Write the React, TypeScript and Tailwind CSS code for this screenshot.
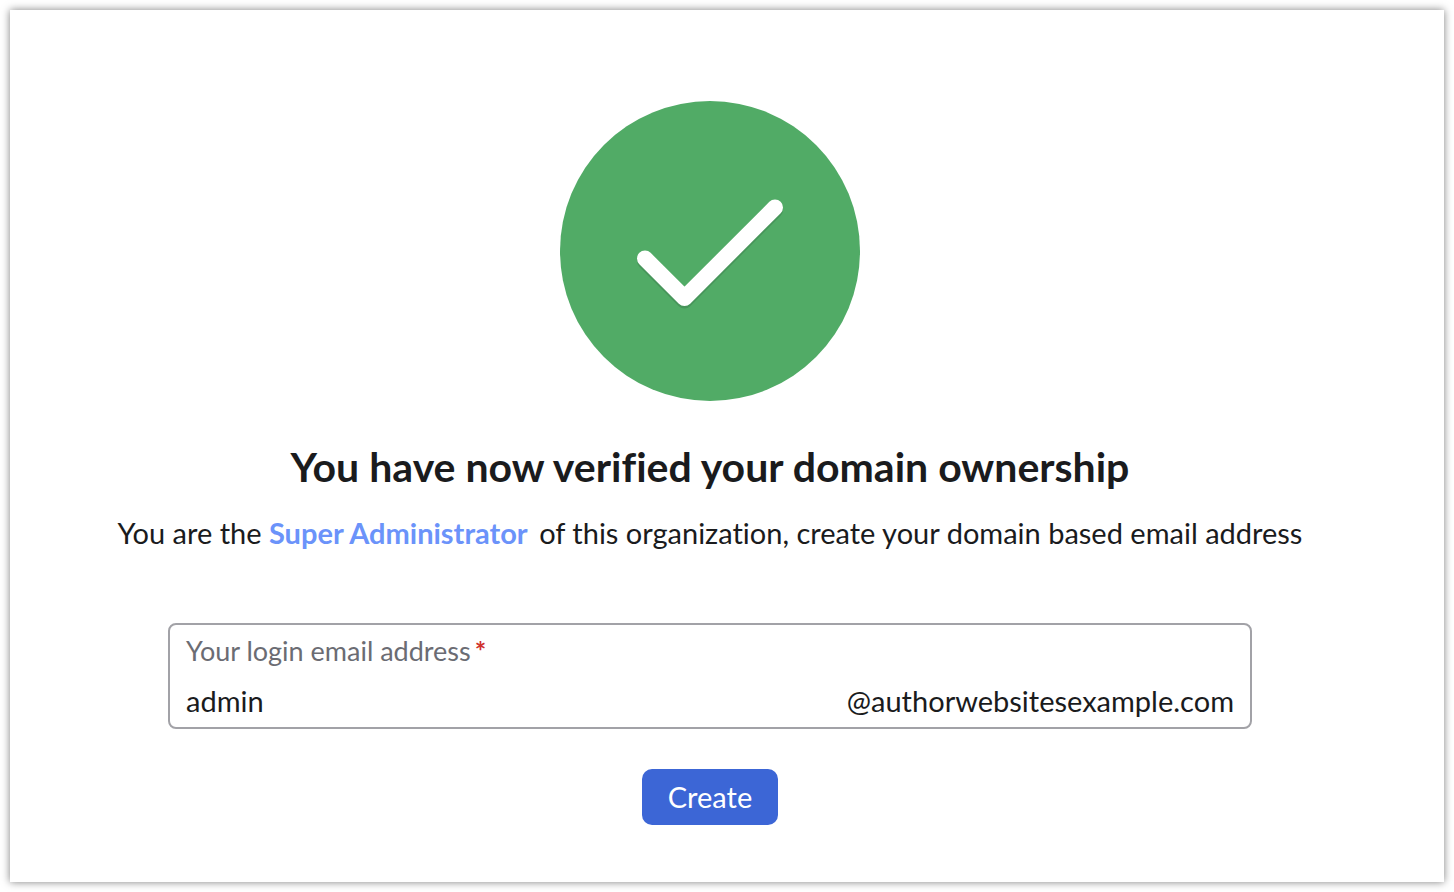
import React from 'react';

export default function App() {
  return (
    <div className="min-h-screen bg-white p-2.5 flex font-['Lato',sans-serif] text-[#1a1b1d] [font-variant-ligatures:none]">
      <main className="flex-1 flex flex-col items-center shadow-[0_0_8px_rgba(0,0,0,0.5)] pt-[91px] pr-[34px] pb-14">
        <svg className="w-[300px] h-[300px]" viewBox="0 0 300 300" fill="none" aria-hidden="true">
          <circle cx="150" cy="150" r="150" fill="#51ab66" />
          <path d="M85 160L124.500 199.500L215 109" stroke="#47955a" strokeWidth="16" strokeLinecap="round" strokeLinejoin="round" />
          <path d="M85 157.500L124.500 197L215 106.500" stroke="#fff" strokeWidth="16" strokeLinecap="round" strokeLinejoin="round" />
        </svg>
        <h1 className="mt-[38px] text-[41px] leading-[56px] font-bold">You have now verified your domain ownership</h1>
        <p className="mt-5 text-[29px] leading-9">
          You are the <strong className="mr-1 font-bold text-[#6b93fa]">Super Administrator</strong> of this organization, create your domain based email address
        </p>
        <form className="mt-[72px] w-full flex flex-col items-center" onSubmit={(e) => e.preventDefault()}>
          <div className="w-[1084px] max-w-full h-[106px] rounded-lg border-2 border-[#a2a2a7] px-4 pt-2">
            <label htmlFor="email" className="block text-[27px] leading-9 text-[#6b6c73]">
              Your login email address<span className="ml-1 font-bold text-[#d0312d]">*</span>
            </label>
            <div className="mt-3.5 flex text-[29px] leading-9">
              <input id="email" type="text" defaultValue="admin" className="flex-1 min-w-0 h-9 outline-none" />
              <span>@authorwebsitesexample.com</span>
            </div>
          </div>
          <button type="submit" className="mt-10 h-14 w-[136px] rounded-[10px] bg-[#3c66d6] text-[29px] leading-9 text-white">Create</button>
        </form>
      </main>
    </div>
  );
}
